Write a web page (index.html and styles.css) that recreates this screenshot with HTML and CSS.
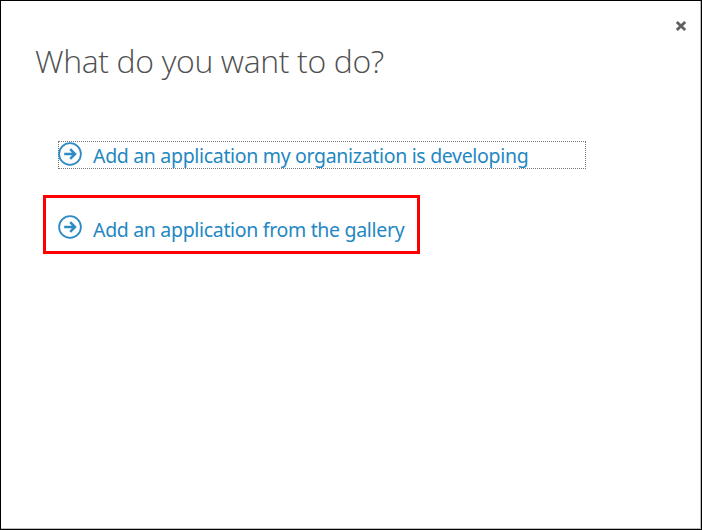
FILE: index.html
```html
<!DOCTYPE html>
<html lang="en">
<head>
<meta charset="utf-8">
<title>What do you want to do?</title>
<link rel="stylesheet" href="styles.css">
</head>
<body>
<main class="dialog">
  <button class="close" aria-label="Close">
    <svg width="12" height="10" viewBox="0 0 12 10"><path d="M1.8 1 10.2 9M10.2 1 1.8 9"/></svg>
  </button>
  <h1 class="title">What do you want to do?</h1>
  <nav class="options">
    <a class="option focused">
      <svg class="arrow" width="24" height="24" viewBox="0 0 24 24"><circle cx="12" cy="12" r="10.9"/><path d="M6.2 12H17M12.2 7.2 17 12l-4.8 4.8"/></svg>
      <span class="label">Add an application my organization is developing</span>
    </a>
    <a class="option highlighted">
      <svg class="arrow" width="24" height="24" viewBox="0 0 24 24"><circle cx="12" cy="12" r="10.9"/><path d="M6.2 12H17M12.2 7.2 17 12l-4.8 4.8"/></svg>
      <span class="label">Add an application from the gallery</span>
    </a>
  </nav>
</main>
</body>
</html>
```

FILE: styles.css
```css
* { box-sizing: border-box; }
body { margin: 0; background: #fff; font-family: "Noto Sans", "Open Sans", sans-serif; }
.dialog {
  width: 702px;
  height: 530px;
  border: 1px solid #000;
  box-shadow: inset -1px -1px #bdbdbd;
  display: flex;
  flex-direction: column;
  overflow: hidden;
}
.close {
  align-self: flex-end;
  margin: 20px 14px 0 0;
  padding: 0;
  border: 0;
  background: none;
  width: 12px;
  height: 10px;
}
.close svg { display: block; fill: none; stroke: #606060; stroke-width: 2.8; }
.title {
  margin: 7px 0 0 34px;
  height: 46px;
  line-height: 46px;
  font-family: "Open Sans", sans-serif;
  font-size: 32px;
  font-weight: 300;
  letter-spacing: -0.36px;
  color: #505050;
  white-space: nowrap;
}
.options {
  margin: 57px 0 0 42px;
  display: flex;
  flex-direction: column;
  align-items: flex-start;
  gap: 26px;
}
.option { display: flex; color: #2387c2; }
.focused {
  width: 528px;
  height: 28px;
  margin-left: 15px;
  border: 1px dotted #777;
}
.highlighted {
  width: 377px;
  height: 59px;
  border: 3px solid #f00;
  padding: 17px 0 0 12px;
}
.arrow { flex: none; fill: none; stroke: #2e8cc5; stroke-width: 1.8; }
.arrow path { stroke-width: 2.5; }
.focused .arrow { margin-left: -1px; }
.label {
  margin: 0 0 0 11px;
  height: 26px;
  font-size: 19.5px;
  line-height: 28px;
  letter-spacing: -0.32px;
  white-space: nowrap;
}
.highlighted .label { margin-top: 1px; }
```
